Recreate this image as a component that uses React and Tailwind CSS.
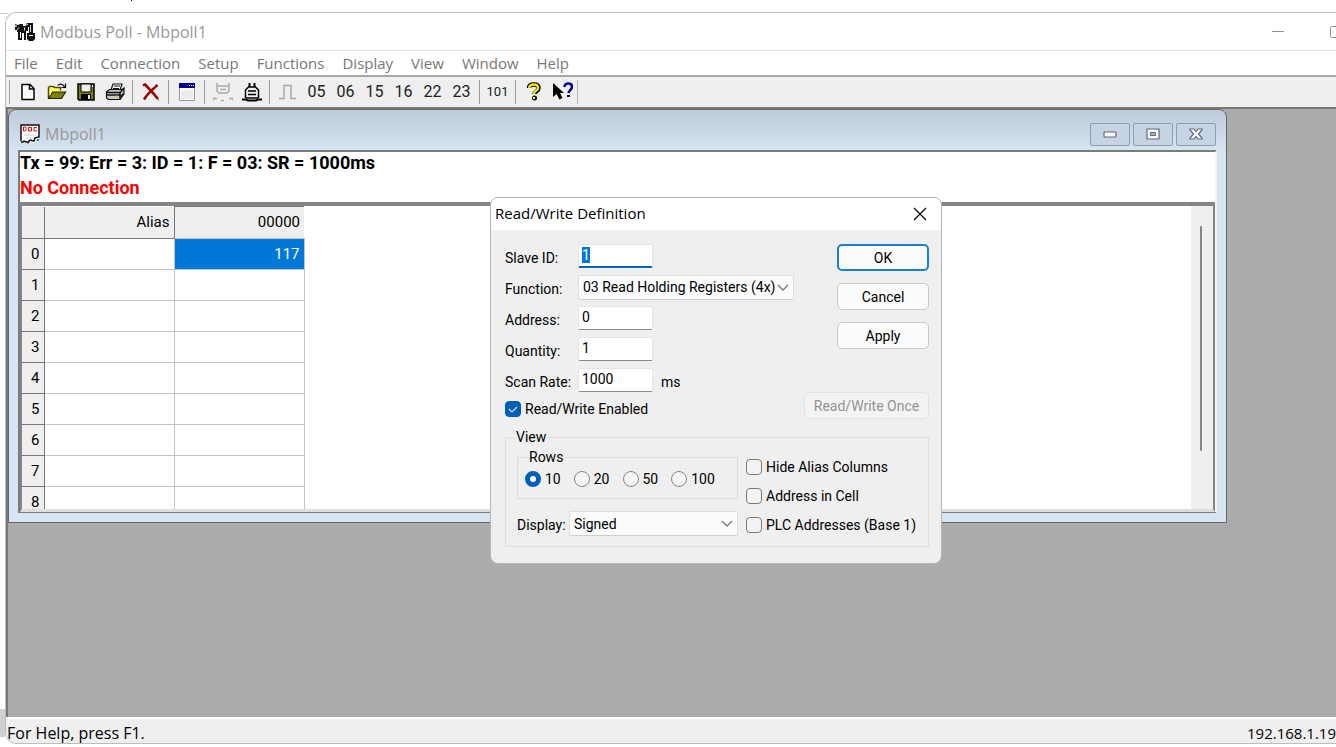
import { useEffect, useRef, useState } from 'react'

const menus = ['File', 'Edit', 'Connection', 'Setup', 'Functions', 'Display', 'View', 'Window', 'Help']

const viewOptions = [
  { label: 'Hide Alias Columns', id: 'hide' },
  { label: 'Address in Cell', id: 'cell' },
  { label: 'PLC Addresses (Base 1)', id: 'plc' },
]

/* ── Icons ── */
const Pix = ({ children, size = 20 }) => (
  <svg width={size} height={size} viewBox={`0 0 ${size} ${size}`} fill="none" aria-hidden="true">
    {children}
  </svg>
)

const AppIcon = () => (
  <Pix>
    <path d="M0 2l3 1 2-1h3v8H7v8H3v-8H2V8H0V5h1z" fill="#111" />
    <path d="M1 4h1M3 6h1M2 7h1" stroke="#fff" />
    <path d="M5 10h1v6H5z" fill="#fff" />
    <path d="M8 4h2l2-3h6v10h-4V5h-1v4h-2v9H9v-7H7V8h1z" fill="#111" />
    <path d="M9.500 5.500v3M10 4l3-2M15.500 3v7" stroke="#ddd" />
    <path d="M12 11h8v6l-2 2h-4l-2-2z" fill="#111" />
    <path d="M14 13.500h4" stroke="#fff" />
  </Pix>
)

const NewIcon = () => (
  <Pix>
    <path d="M4 2.500h8l4 4v11H4z" fill="#fff" stroke="#000" strokeWidth="1.500" />
    <path d="M11.500 2.500v4.500h4.500" stroke="#000" strokeWidth="1.500" />
  </Pix>
)

const OpenIcon = () => (
  <Pix>
    <path d="M1.500 16V5.500l1-1h4l1 1h6v3" fill="#ffff66" stroke="#4d4d00" strokeWidth="1.500" />
    <path d="M1.500 16.500l4-6.500h13l-4 6.500z" fill="#808000" stroke="#222200" strokeWidth="1.200" />
    <path d="M3 14V7h9v2H5z" fill="#ffff66" />
    <path d="M11 3.500c1-2 5-2 6.500 1.500M18.500 1.500v4h-4" stroke="#111" strokeWidth="1.200" />
  </Pix>
)

const SaveIcon = () => (
  <Pix>
    <path d="M2 2h16v16H3l-1-1z" fill="#808000" stroke="#000" strokeWidth="1.500" />
    <path d="M5 2h10v8H5z" fill="#efefef" stroke="#000" />
    <path d="M5 12h10v6H5z" fill="#000" />
    <path d="M12 13h2v4h-2z" fill="#efefef" />
    <path d="M16 3h1v2h-1z" fill="#efefef" />
  </Pix>
)

const PrintIcon = () => (
  <Pix>
    <path d="M6 8l2-6h9l-2 6" fill="#fff" stroke="#111" strokeWidth="1.200" />
    <path d="M9 4h6M8 6.500h6" stroke="#111" />
    <path d="M1.500 10l3-2.500H17l2-1.500v6l-4 5.500H3.500l-2-1.500z" fill="#c8c8c8" stroke="#111" strokeWidth="1.200" />
    <path d="M1.500 10.500H15l4-4M2 13h13M15 10.500v7M15.500 15l3-3.500" stroke="#111" strokeWidth="1.500" />
    <path d="M10 14.500h3" stroke="#d4d400" strokeWidth="1.500" />
  </Pix>
)

const DeleteIcon = () => (
  <Pix>
    <path d="M2 3.500l2-1c4 4 8 8 13 14.500M16.500 3C12 7 7 11 3 17.500" stroke="#990000" strokeWidth="2.500" />
    <path d="M17 18h1" stroke="#990000" />
  </Pix>
)

const WindowIcon = () => (
  <Pix>
    <path d="M2.500 1.500h15v17h-15z" fill="#fff" stroke="#8c98a8" />
    <path d="M2 1h16v5H2z" fill="#000090" />
    <path d="M12 3.500h1M14 3.500h1M16 3.500h1" stroke="#fff" />
    <path d="M4 8h12v9H4z" fill="#ececec" />
  </Pix>
)

const PlugOffIcon = () => (
  <Pix>
    <path d="M4 1v8l2 2h8l2-2V1M4 4h12M7 7.500h6" stroke="#aaa" strokeWidth="1.500" />
    <path d="M0 18.500v-2h4M8 18.500h3M20 18.500v-2h-4" stroke="#aaa" strokeWidth="1.500" />
  </Pix>
)

const PlugOnIcon = () => (
  <Pix>
    <path d="M7.500 5V1M12.500 5V1" stroke="#000" strokeWidth="2" />
    <path d="M3.500 16V8l3-3h7l3 3v8M6 9h8M6 12.500h8M4 16h12" stroke="#000" strokeWidth="1.500" />
    <path d="M0 17.500h4l2 1h8l2-1h4" stroke="#000" strokeWidth="2" />
  </Pix>
)

const PulseIcon = () => (
  <Pix>
    <path d="M1 16.500h5V3.500h7v13h5" stroke="#a8a8a8" strokeWidth="1.500" />
  </Pix>
)

const HelpIcon = () => (
  <Pix>
    <path d="M5 6C5 3 7 2.500 10 2.500S14.500 4 14.500 6s-1 2.500-2.500 3.500-1.500 1-1.500 2.500" stroke="#000" strokeWidth="4.500" />
    <circle cx="10.500" cy="16" r="2.500" fill="#000" />
    <path d="M5 6C5.500 3 7 2.500 10 2.500S14 4 14 6s-1 2-2.500 3S10 10.500 10 12" stroke="#f0e800" strokeWidth="2.500" />
    <circle cx="10" cy="16" r="1.300" fill="#f0e800" />
  </Pix>
)

const PointerHelpIcon = () => (
  <Pix>
    <path d="M0 1v14l3.500-3 3 5.500 3-1.500-2.500-5H11z" fill="#000" />
    <path d="M11.500 5c0-3 1.500-3.500 4-3.500S19 2.500 19 5s-3 3-3.500 6" stroke="#000090" strokeWidth="2.500" />
    <path d="M14 13h3v2h-3z" fill="#000090" />
  </Pix>
)

const DocIcon = () => (
  <Pix>
    <path d="M1 1h18v14l-3 1-2 3-4-1-3 1-3-2H1z" fill="#fff" />
    <path d="M1 17V1h18v12l-4 1-1 3-4-1-2 2.500-4-1.500-1 1H1" stroke="#111" strokeWidth="1.500" />
    <path d="M3.500 3v4H5l1-1V4L5 3zM8.500 3.500h3v3.500h-3zM17 4l-1-.5h-2V7h2l1-.5" stroke="#f00" />
    <path d="M4 11h12M5 14h6" stroke="#ccc" />
    <path d="M17 15h2v2h-2z" fill="#009090" />
  </Pix>
)

const Chevron = () => (
  <svg className="pointer-events-none absolute right-[5px] top-[9px]" width="12" height="8" viewBox="0 0 12 8" fill="none" aria-hidden="true">
    <path d="M1 1l5 5 5-5" stroke="#777" strokeWidth="1.300" />
  </svg>
)

const tools = [
  { name: 'New', icon: <NewIcon /> },
  { name: 'Open', icon: <OpenIcon /> },
  { name: 'Save', icon: <SaveIcon /> },
  { name: 'Print', icon: <PrintIcon /> },
  null,
  { name: 'Delete', icon: <DeleteIcon /> },
  null,
  { name: 'Definition', icon: <WindowIcon /> },
  null,
  { name: 'Connect', icon: <PlugOffIcon /> },
  { name: 'Disconnect', icon: <PlugOnIcon /> },
  null,
  { name: 'Pulse', icon: <PulseIcon /> },
  { name: '05' },
  { name: '06' },
  { name: '15' },
  { name: '16' },
  { name: '22' },
  { name: '23' },
  null,
  { name: '101', small: true },
  null,
  { name: 'About', icon: <HelpIcon /> },
  { name: 'Context help', icon: <PointerHelpIcon /> },
]

/* ── Form parts ── */
const Field = ({ id, label, value, inputRef, suffix }) => (
  <div className="flex h-6 items-center">
    <label htmlFor={id} className="w-[73px] shrink-0 pt-1">{label}</label>
    <input
      id={id}
      ref={inputRef}
      defaultValue={value}
      className="h-6 w-[75px] rounded-xs border border-b-[#8a8a8a] border-[#e4e4e4] bg-white px-[3px] pb-0.5 outline-none selection:bg-[#0078d7] selection:text-white focus:border-b-2 focus:border-b-[#0067c0]"
    />
    {suffix && <span className="pl-2 pt-1">{suffix}</span>}
  </div>
)

const Select = ({ id, options, className }) => (
  <div className={`relative ${className}`}>
    <select id={id} className="h-[25px] w-full appearance-none rounded-xs border border-[#dedede] border-b-[#cfcfcf] bg-[#fbfbfb] pl-1 outline-none">
      {options.map(o => <option key={o}>{o}</option>)}
    </select>
    <Chevron />
  </div>
)

const Check = ({ label, checked }) => (
  <label className="flex items-center gap-1">
    <span className="relative flex">
      <input
        type="checkbox"
        defaultChecked={checked}
        className="peer size-4 appearance-none rounded-sm border border-[#7a7a7a] bg-[#f3f3f3] checked:border-[#005fb8] checked:bg-[#005fb8]"
      />
      <svg className="pointer-events-none absolute inset-0 opacity-0 peer-checked:opacity-100" width="16" height="16" viewBox="0 0 16 16" fill="none" aria-hidden="true">
        <path d="M4 8l3 3 5-5" stroke="#cfe4f7" strokeWidth="1.200" />
      </svg>
    </span>
    {label}
  </label>
)

const PushButton = ({ children, primary }) => (
  <button
    className={`h-[27px] w-[92px] rounded-[5px] bg-[#fbfbfb] ${
      primary ? 'border-2 border-[#1a80d4]' : 'border border-[#c9c9c9]'
    }`}
  >
    {children}
  </button>
)

const Dialog = () => {
  const slaveRef = useRef(null)
  const [rows, setRows] = useState('10')

  useEffect(() => {
    slaveRef.current?.focus()
    slaveRef.current?.select()
  }, [])

  return (
    <section
      role="dialog"
      aria-label="Read/Write Definition"
      className="absolute left-[490px] top-[197px] w-[452px] overflow-hidden rounded-lg border border-[#b4b4b4] bg-[#efefef] font-['Roboto',sans-serif] text-sm text-black"
    >
      <header className="flex h-8 items-center justify-between bg-white pl-1 pr-3.5">
        <h2 className="font-['Open_Sans',sans-serif] text-[15px]">Read/Write Definition</h2>
        <button aria-label="Close">
          <svg width="14" height="14" viewBox="0 0 14 14" fill="none"><path d="M1 1l12 12M13 1L1 13" stroke="#000" strokeWidth="1.200" /></svg>
        </button>
      </header>

      <div className="pb-4 pl-3.5 pr-3 pt-3.5">
        <div className="flex justify-between">
          <div className="flex flex-col gap-[7px]">
            <Field id="slave" label="Slave ID:" value="1" inputRef={slaveRef} />
            <div className="flex h-6 items-center">
              <label htmlFor="function" className="w-[73px] shrink-0 pt-1">Function:</label>
              <Select id="function" className="w-[216px]" options={['03 Read Holding Registers (4x)', '04 Read Input Registers (3x)']} />
            </div>
            <Field id="address" label="Address:" value="0" />
            <Field id="quantity" label="Quantity:" value="1" />
            <Field id="scan" label="Scan Rate:" value="1000" suffix="ms" />
          </div>
          <div className="flex flex-col gap-3">
            <PushButton primary>OK</PushButton>
            <PushButton>Cancel</PushButton>
            <PushButton>Apply</PushButton>
          </div>
        </div>

        <div className="flex items-center justify-between">
          <div className="pt-1.5"><Check label="Read/Write Enabled" checked /></div>
          <button disabled className="h-[27px] w-[125px] rounded-[5px] border border-[#e2e2e2] bg-[#f3f3f3] text-[#949494]">
            Read/Write Once
          </button>
        </div>

        <fieldset className="mt-2 border border-[#dcdcdc] pb-2.5 pl-2">
          <legend className="px-0.5 leading-5">View</legend>
          <div className="flex gap-2 pl-[3px]">
            <div className="w-[221px]">
              <fieldset className="flex h-[52px] items-start gap-[13px] border border-[#dcdcdc] pl-[7px]">
                <legend className="ml-0.5 px-0.5 leading-5">Rows</legend>
                {['10', '20', '50', '100'].map(n => (
                  <label key={n} className="flex items-center gap-1 pt-0.5">
                    <input
                      type="radio"
                      name="rows"
                      checked={rows === n}
                      onChange={() => setRows(n)}
                      className="size-4 appearance-none rounded-full border border-[#858585] bg-[#f6f6f6] checked:border-[5px] checked:border-[#005fb8] checked:bg-white"
                    />
                    {n}
                  </label>
                ))}
              </fieldset>
              <div className="mt-3 flex items-center">
                <label htmlFor="display" className="w-[52px] shrink-0 pt-0.5">Display:</label>
                <Select id="display" className="grow" options={['Signed', 'Unsigned', 'Hex', 'Binary']} />
              </div>
            </div>
            <div className="flex flex-col gap-[9px] pt-2.5">
              {viewOptions.map(o => <Check key={o.id} label={o.label} />)}
            </div>
          </div>
        </fieldset>
      </div>
    </section>
  )
}

/* ── Child window with the register table ── */
const captionBtn = 'flex h-[23px] w-10 items-center justify-center rounded-xs border border-[#8d9db8] bg-[#c6d3e2]'

const PollWindow = () => (
  <section className="absolute left-0 top-0 w-[1219px] rounded-t-lg border border-[#666] bg-linear-to-b from-[#bccad9] to-[#d7e4f2] to-10% px-[9px] pb-[9px] font-['Roboto',sans-serif]">
    <header className="flex h-10 items-center justify-between pl-0.5 pr-px pt-2">
      <h2 className="flex items-center gap-[5px] font-['Open_Sans',sans-serif] text-base text-[#999]">
        <DocIcon />
        Mbpoll1
      </h2>
      <div className="flex gap-[3px]">
        <button aria-label="Minimize" className={captionBtn}>
          <svg width="14" height="8" viewBox="0 0 14 8"><rect x="1" y="2" width="12" height="5" rx="1" fill="#fafafa" stroke="#606880" strokeWidth="1.200" /></svg>
        </button>
        <button aria-label="Maximize" className={captionBtn}>
          <svg width="14" height="12" viewBox="0 0 14 12"><path d="M1 1h12v10H1z" fill="#fafafa" stroke="#606880" strokeWidth="1.200" /><path d="M4.500 4.500h5v3h-5z" fill="#a8b8cc" stroke="#606880" /></svg>
        </button>
        <button aria-label="Close" className={captionBtn}>
          <svg width="14" height="12" viewBox="0 0 14 12"><path d="M1 1h4l2 2.500L9 1h4v1L9.500 6l3.500 4v1H9L7 8.500 5 11H1v-1l3.500-4L1 2z" fill="#fafafa" stroke="#606880" strokeWidth="1.200" /></svg>
        </button>
      </div>
    </header>

    <div className="border-2 border-b border-[#7b7b7b] border-r-[#f4f4f4] bg-white">
      <div className="h-[52px] text-lg font-bold leading-[25px] text-black">
        <p className="-mt-0.5">Tx = 99: Err = 3: ID = 1: F = 03: SR = 1000ms</p>
        <p className="text-[#fe0000]">No Connection</p>
      </div>
      <div className="flex h-[310px] justify-between overflow-hidden border-2 border-b-[3px] border-t-4 border-[#858585] border-b-[#dedede]">
        <table className="h-[310px] w-[282px] table-fixed border-collapse text-[15px] text-black">
          <thead>
            <tr className="h-8 bg-[#efefef]">
              <th className="w-[22px] border-b border-r border-[#777]" />
              <th className="w-[130px] border-b border-r border-[#777] pr-1 text-right font-normal">Alias</th>
              <th className="w-[130px] border-l border-t border-[#777] pr-1 text-right font-normal">00000</th>
            </tr>
          </thead>
          <tbody>
            {[117, '', '', '', '', '', '', '', ''].map((v, i) => (
              <tr key={i} className="h-[31px]">
                <th className="border-b border-r border-[#777] bg-[#efefef] pr-1 text-right font-normal">{i}</th>
                <td className="border border-[#c4c4c4]" />
                <td className={`border border-[#c4c4c4] pr-1 text-right ${i === 0 ? 'bg-[#0078d7] text-white' : ''}`}>{v}</td>
              </tr>
            ))}
          </tbody>
        </table>
        <div className="w-[22px] bg-[#efefef] pl-[9px] pt-5">
          <div className="h-[225px] w-0.5 rounded-full bg-[#868686]" />
        </div>
      </div>
    </div>
  </section>
)

const App = () => (
  <div className="relative flex h-screen flex-col overflow-hidden bg-white pb-[3px] pl-[5px] pt-3 font-['Open_Sans',sans-serif]">
    {/* edges of the window behind */}
    <div className="absolute left-0 top-[13px] h-px w-[9px] bg-[#ccc]" />
    <div className="absolute left-[131px] top-0 h-px w-px bg-black" />
    <div className="absolute left-0 bottom-[10px] h-7 w-[5px] bg-[#d0d0d0]" />

    <main className="flex grow flex-col overflow-hidden rounded-l-xl border border-r-0 border-[#bdbdbd] bg-[#efefef]">
      <header className="flex h-[38px] shrink-0 items-center justify-between border-b border-[#e2e2e2] bg-white pl-[9px]">
        <h1 className="flex items-center gap-[5px] text-base text-[#999]">
          <AppIcon />
          Modbus Poll - Mbpoll1
        </h1>
        <div className="-mr-1.5 flex gap-[46px]">
          <button aria-label="Minimize" className="flex items-center">
            <svg width="12" height="12" viewBox="0 0 12 12"><path d="M0 5.500h12" stroke="#909090" /></svg>
          </button>
          <button aria-label="Maximize">
            <svg width="12" height="12" viewBox="0 0 12 12" fill="none"><rect x=".5" y=".5" width="11" height="11" rx="1" stroke="#909090" /></svg>
          </button>
        </div>
      </header>

      <nav className="flex h-[26px] shrink-0 items-center gap-[18px] border-b-2 border-[#a8a8a8] bg-white pl-2 text-[15px] text-[#777]">
        {menus.map(m => <button key={m}>{m}</button>)}
      </nav>

      <div className="flex h-[30px] shrink-0 items-center">
        <div className="ml-[3px] h-6 w-1 border-l border-[#a0a0a0]" />
        {tools.map((t, i) => t ? (
          <button
            key={t.name}
            aria-label={t.name}
            className={`flex w-[29px] items-center justify-center font-['Roboto',sans-serif] text-[#222] ${t.small ? 'text-[13px]' : 'text-base'}`}
          >
            {t.icon || t.name}
          </button>
        ) : (
          <div key={i} className="flex w-[7px] justify-center"><div className="h-6 w-px bg-[#999]" /></div>
        ))}
        <div className="h-6 w-px bg-[#b4b4b4]" />
      </div>

      <div className="relative grow border-l-2 border-t-2 border-[#777] bg-[#ababab]">
        <PollWindow />
      </div>

      <footer className="flex h-[26px] shrink-0 items-center justify-between border-t-2 border-white bg-[#efefef] pl-px pt-1 text-black">
        <span className="text-base">For Help, press F1.</span>
        <span className="text-[15px]">192.168.1.19</span>
      </footer>
    </main>
    <Dialog />
  </div>
)

export default App
